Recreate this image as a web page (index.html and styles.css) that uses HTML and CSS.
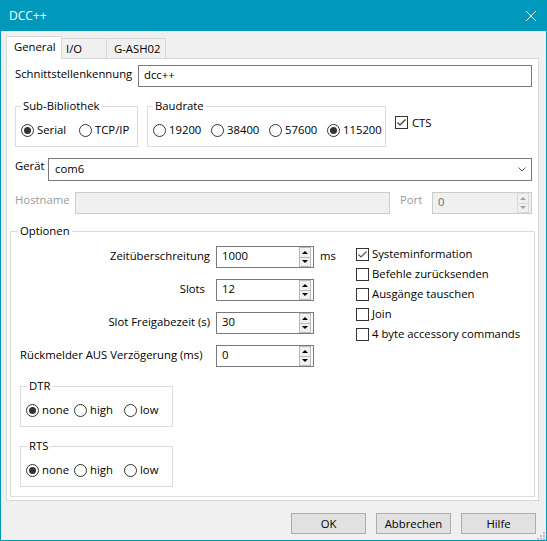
FILE: index.html
```html
<!DOCTYPE html>
<html lang="de">
<head>
<meta charset="utf-8">
<title>DCC++</title>
<link rel="stylesheet" href="styles.css">
</head>
<body>
<div class="window">
  <div class="titlebar">
    <span class="title">DCC++</span>
    <svg class="close" width="10" height="10" viewBox="0 0 10 10"><path d="M0 0L10 10M10 0L0 10" stroke="#fff" stroke-width="1" fill="none"/></svg>
  </div>

  <div class="tabs">
    <div class="tab tab-active tab-general">General</div>
    <div class="tab tab-io">I/O</div>
    <div class="tab tab-gash">G-ASH02</div>
  </div>

  <div class="panel">
    <div class="row row-1">
      <span class="lbl lbl-name">Schnittstellenkennung</span>
      <div class="textbox grow">dcc++</div>
    </div>

    <div class="row row-2">
      <fieldset class="group group-sub">
        <legend>Sub-Bibliothek</legend>
        <div class="radios">
          <span class="opt w58"><span class="radio on"></span>Serial</span>
          <span class="opt"><span class="radio"></span>TCP/IP</span>
        </div>
      </fieldset>
      <fieldset class="group group-baud">
        <legend>Baudrate</legend>
        <div class="radios">
          <span class="opt w58"><span class="radio"></span>19200</span>
          <span class="opt w58"><span class="radio"></span>38400</span>
          <span class="opt w58"><span class="radio"></span>57600</span>
          <span class="opt"><span class="radio on"></span>115200</span>
        </div>
      </fieldset>
      <span class="check-item cts"><span class="checkbox"><svg width="11" height="11" viewBox="0 0 11 11"><path d="M1.5 5.5L4 8L9.5 2.5" fill="none" stroke="#333" stroke-width="1.2"/></svg></span>CTS</span>
    </div>

    <div class="row row-3">
      <span class="lbl lbl-geraet">Gerät</span>
      <div class="combo grow">
        <span class="combo-val">com6</span>
        <svg class="chevron" width="8" height="5" viewBox="0 0 8 5"><path d="M0.5 0.5L4 4L7.5 0.5" fill="none" stroke="#555" stroke-width="1"/></svg>
      </div>
    </div>

    <div class="row row-4">
      <span class="lbl lbl-host disabled">Hostname</span>
      <div class="textbox textbox-disabled host"></div>
      <span class="lbl lbl-port disabled">Port</span>
      <div class="spin spin-disabled grow">
        <span class="spin-val">0</span>
        <span class="spin-btns"><span class="sb sb-up"></span><span class="sb sb-down"></span></span>
      </div>
    </div>

    <fieldset class="group optionen">
      <legend class="opt-legend">Optionen</legend>
      <div class="opt-body">
        <div class="opt-left">
          <div class="spin-grid">
            <span class="spin-label">Zeitüberschreitung</span>
            <div class="spin"><span class="spin-val">1000</span><span class="spin-btns"><span class="sb sb-up"></span><span class="sb sb-down"></span></span></div>
            <span class="unit">ms</span>

            <span class="spin-label slots">Slots</span>
            <div class="spin"><span class="spin-val">12</span><span class="spin-btns"><span class="sb sb-up"></span><span class="sb sb-down"></span></span></div>

            <span class="spin-label">Slot Freigabezeit (s)</span>
            <div class="spin"><span class="spin-val">30</span><span class="spin-btns"><span class="sb sb-up"></span><span class="sb sb-down"></span></span></div>

            <span class="spin-label left">Rückmelder AUS Verzögerung (ms)</span>
            <div class="spin"><span class="spin-val">0</span><span class="spin-btns"><span class="sb sb-up"></span><span class="sb sb-down"></span></span></div>
          </div>

          <fieldset class="group group-line">
            <legend>DTR</legend>
            <div class="radios">
              <span class="opt w48"><span class="radio on"></span>none</span>
              <span class="opt w50"><span class="radio"></span>high</span>
              <span class="opt"><span class="radio"></span>low</span>
            </div>
          </fieldset>

          <fieldset class="group group-line">
            <legend>RTS</legend>
            <div class="radios">
              <span class="opt w48"><span class="radio on"></span>none</span>
              <span class="opt w50"><span class="radio"></span>high</span>
              <span class="opt"><span class="radio"></span>low</span>
            </div>
          </fieldset>
        </div>

        <div class="checklist">
          <span class="check-item"><span class="checkbox"><svg width="11" height="11" viewBox="0 0 11 11"><path d="M1.5 5.5L4 8L9.5 2.5" fill="none" stroke="#555" stroke-width="1.2"/></svg></span>Systeminformation</span>
          <span class="check-item"><span class="checkbox"></span>Befehle zurücksenden</span>
          <span class="check-item"><span class="checkbox"></span>Ausgänge tauschen</span>
          <span class="check-item"><span class="checkbox"></span>Join</span>
          <span class="check-item"><span class="checkbox"></span>4 byte accessory commands</span>
        </div>
      </div>
    </fieldset>
  </div>

  <div class="buttons">
    <button class="btn">OK</button>
    <button class="btn">Abbrechen</button>
    <button class="btn">Hilfe</button>
  </div>

  <svg class="grip" width="8" height="8" viewBox="0 0 8 8">
    <rect x="6" y="0" width="2" height="2" fill="#bfbfbf"/>
    <rect x="3" y="3" width="2" height="2" fill="#bfbfbf"/>
    <rect x="6" y="3" width="2" height="2" fill="#bfbfbf"/>
    <rect x="0" y="6" width="2" height="2" fill="#bfbfbf"/>
    <rect x="3" y="6" width="2" height="2" fill="#bfbfbf"/>
    <rect x="6" y="6" width="2" height="2" fill="#bfbfbf"/>
  </svg>
</div>
</body>
</html>
```

FILE: styles.css
```css
* { box-sizing: border-box; }

html, body {
  margin: 0;
  padding: 0;
}

body {
  width: 547px;
  height: 541px;
  overflow: hidden;
  font-family: "Open Sans", "Noto Sans", sans-serif;
  font-size: 11.3px;
  color: #000;
  background: #f0f0f0;
}

.window {
  position: relative;
  width: 547px;
  height: 541px;
  border: 1px solid #0099bc;
  border-top: 0;
  background: #f0f0f0;
  display: flex;
  flex-direction: column;
}

.titlebar {
  height: 31px;
  flex: none;
  background: #0099bc;
  color: #fff;
  display: flex;
  align-items: center;
  justify-content: space-between;
  padding: 0 10px 0 8px;
  font-size: 12px;
}

.close { display: block; }

/* Tabs */
.tabs {
  display: flex;
  align-items: flex-end;
  height: 22px;
  margin: 5px 0 0 5px;
  flex: none;
}

.tab {
  height: 20px;
  border: 1px solid #d9d9d9;
  border-bottom: 0;
  background: #f0f0f0;
  line-height: 19px;
  margin-left: -1px;
  white-space: nowrap;
}

.tab-active {
  height: 23px;
  margin-bottom: -1px;
  margin-left: 0;
  background: #fff;
  position: relative;
  z-index: 1;
  line-height: 20px;
}

.tab-general { width: 56px; padding-left: 7px; }
.tab-io { width: 46px; padding-left: 4px; }
.tab-gash { width: 60px; padding-left: 7px; }

/* Panel */
.panel {
  margin: 0 7px 0 5px;
  background: #fff;
  border: 1px solid #d9d9d9;
  padding: 6px 3px 3px;
  flex: none;
}

.row {
  display: flex;
  align-items: flex-start;
  margin: 0 3px 0 5px;
}

.row-2 { margin-top: 11px; align-items: center; }
.row-3, .row-4 { margin-top: 11px; }

.grow { flex: 1; min-width: 0; }

.lbl {
  line-height: 16px;
  white-space: nowrap;
  flex: none;
}

.lbl-name { width: 123px; margin-top: 1px; }
.lbl-geraet { width: 33px; margin-top: 0; }
.lbl-host { width: 60px; margin-top: 0; }
.lbl-port { width: 32px; margin-left: 10px; margin-top: 0; }

.disabled { color: #9a9a9a; }

.textbox {
  height: 22px;
  border: 1px solid #7a7a7a;
  background: #fff;
  padding: 0 5px;
  line-height: 18px;
  white-space: nowrap;
}

.textbox-disabled {
  background: #f0f0f0;
  border-color: #cccccc;
}

.host { width: 315px; flex: none; }

.combo {
  height: 23px;
  border: 1px solid #7a7a7a;
  background: #fff;
  display: flex;
  align-items: flex-start;
  justify-content: space-between;
  padding: 0 5px 0 6px;
  line-height: 19px;
}

.chevron { display: block; margin-top: 8px; }

/* Group boxes */
.group {
  margin: 0;
  border: 1px solid #dcdcdc;
  padding: 8px 5px 8px 5px;
  min-width: 0;
}

.group legend {
  padding: 0 2px;
  line-height: 16px;
}

.group-sub { width: 123px; flex: none; }
.group-baud { width: 239px; margin-left: 9px; flex: none; }

.radios {
  display: flex;
  height: 16px;
}

.opt {
  display: inline-flex;
  align-items: center;
  gap: 3px;
  line-height: 16px;
  white-space: nowrap;
  flex: none;
}

.w58 { width: 58px; }
.w48 { width: 48px; }
.w50 { width: 50px; }

.radio {
  width: 13px;
  height: 13px;
  border: 1px solid #333;
  border-radius: 50%;
  background: #fff;
  display: flex;
  align-items: center;
  justify-content: center;
  flex: none;
}

.radio.on::after {
  content: "";
  width: 7px;
  height: 7px;
  border-radius: 50%;
  background: #333;
}

.check-item {
  display: flex;
  align-items: center;
  gap: 3px;
  height: 20px;
  line-height: 20px;
  white-space: nowrap;
}

.cts { margin-left: 9px; gap: 4px; }

.checkbox {
  width: 13px;
  height: 13px;
  border: 1px solid #333;
  background: #fff;
  flex: none;
  display: flex;
}

.checkbox svg { display: block; }

/* Spin boxes */
.spin {
  display: flex;
  height: 22px;
  border: 1px solid #7a7a7a;
  background: #fff;
}

.spin-disabled {
  background: #f0f0f0;
  border-color: #cccccc;
  color: #6d6d6d;
}

.spin-val {
  flex: 1;
  padding-left: 5px;
  line-height: 18px;
}

.spin-btns {
  display: flex;
  flex-direction: column;
  width: 12px;
  margin-right: 2px;
  flex: none;
}

.sb {
  flex: 1;
  border: 1px solid #b9b9b9;
  background: #f0f0f0;
  display: flex;
  align-items: center;
  justify-content: center;
}

.sb + .sb { border-top: 0; }

.sb-up::after {
  content: "";
  border-left: 3px solid transparent;
  border-right: 3px solid transparent;
  border-bottom: 3px solid #000;
}

.sb-down::after {
  content: "";
  border-left: 3px solid transparent;
  border-right: 3px solid transparent;
  border-top: 3px solid #000;
}

.spin-disabled .sb { border-color: #dadada; background: #f0f0f0; }
.spin-disabled .sb-up::after { border-bottom-color: #a0a0a0; }
.spin-disabled .sb-down::after { border-top-color: #a0a0a0; }

/* Optionen */
.optionen {
  margin: 9px 0 0;
  padding: 0 0 9px 9px;
}

.optionen .opt-legend { margin-left: -2px; }

.opt-body { display: flex; }

.opt-left { width: 336px; flex: none; }

.spin-grid {
  display: grid;
  grid-template-columns: 190px 98px auto;
  column-gap: 6px;
  row-gap: 11px;
  margin-top: 7px;
  align-items: start;
}

.spin-label {
  grid-column: 1;
  text-align: right;
  line-height: 16px;
  margin-top: 2px;
  white-space: nowrap;
}

.spin-label.slots { margin-right: 5px; }
.spin-label.left { text-align: left; }

.unit {
  line-height: 16px;
  margin-top: 2px;
}

.group-line {
  width: 153px;
  margin-top: 11px;
}

.group-line legend { margin-left: 1px; }

.checklist {
  display: flex;
  flex-direction: column;
  margin-top: 5px;
}

/* Buttons */
.buttons {
  display: flex;
  justify-content: flex-end;
  gap: 10px;
  margin: 12px 10px 0 0;
  flex: none;
}

.btn {
  width: 75px;
  height: 21px;
  border: 1px solid #adadad;
  background: #e1e1e1;
  font: inherit;
  color: #000;
  line-height: 19px;
  padding: 0;
  text-align: center;
}

.grip {
  position: absolute;
  right: 1px;
  bottom: 0;
  display: block;
}
```
